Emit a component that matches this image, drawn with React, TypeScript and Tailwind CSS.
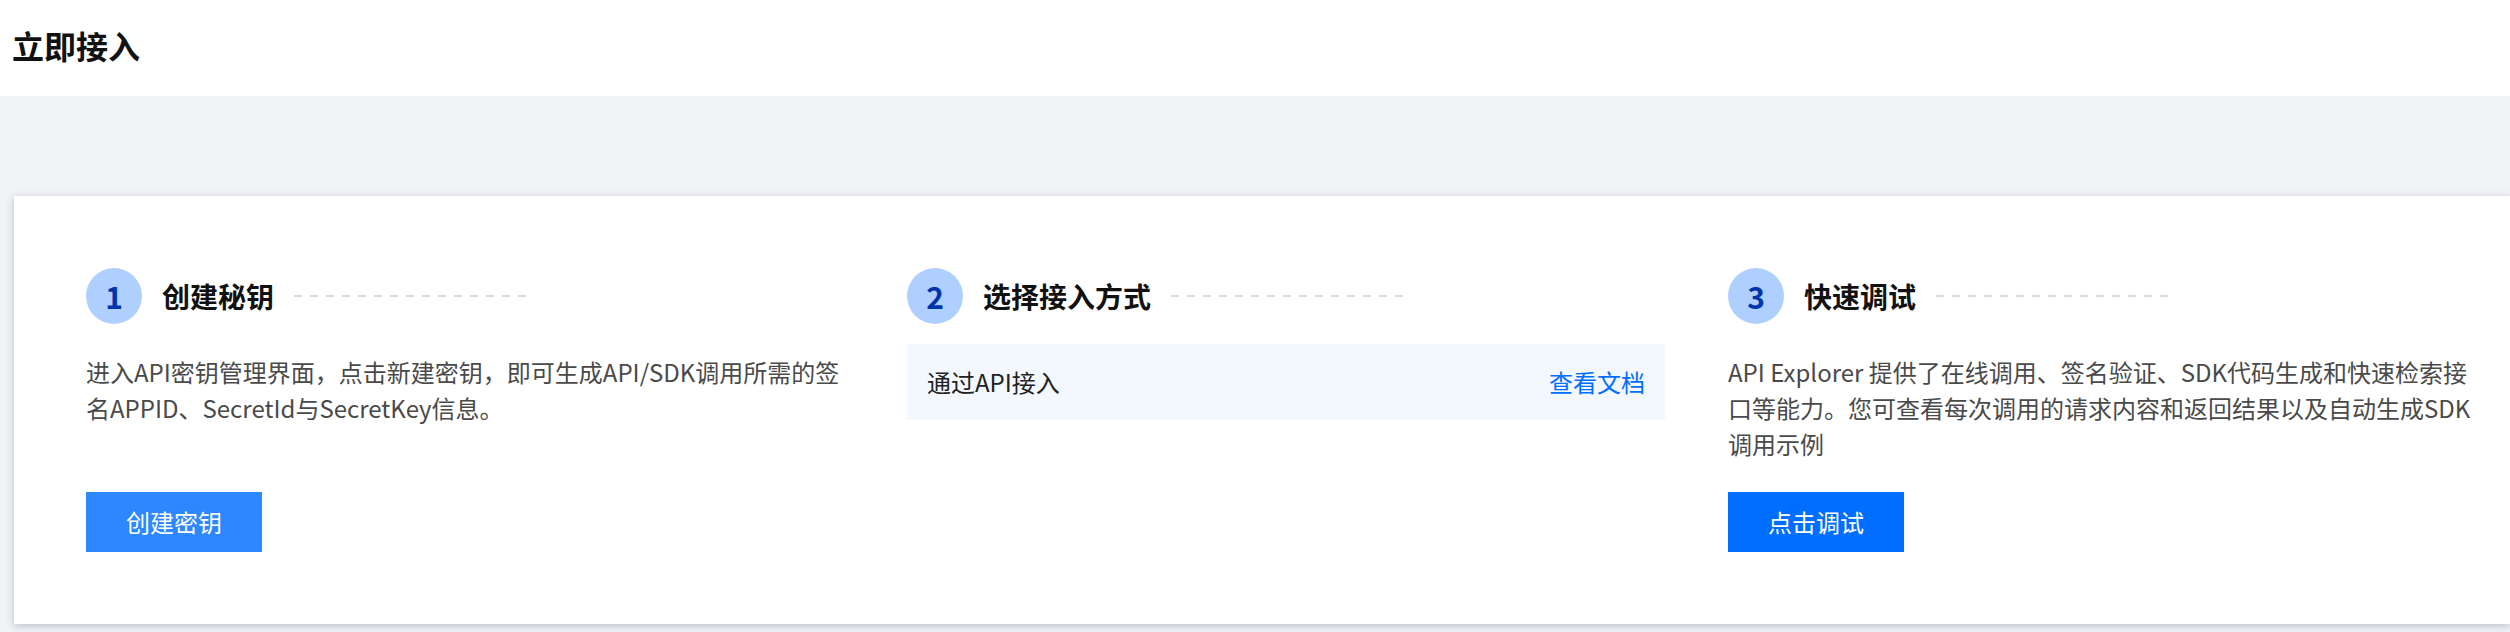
const steps = [
  {
    no: "1",
    title: "创建秘钥",
    desc: "进入API密钥管理界面，点击新建密钥，即可生成API/SDK调用所需的签名APPID、SecretId与SecretKey信息。",
    button: "创建密钥",
    buttonClass: "bg-[#2d87ff]",
  },
  {
    no: "2",
    title: "选择接入方式",
  },
  {
    no: "3",
    title: "快速调试",
    desc: "API Explorer 提供了在线调用、签名验证、SDK代码生成和快速检索接口等能力。您可查看每次调用的请求内容和返回结果以及自动生成SDK调用示例",
    button: "点击调试",
    buttonClass: "bg-[#006eff]",
  },
]

function StepHead({ no, title }: { no: string; title: string }) {
  return (
    <div className="flex items-center h-[56px]">
      <div className="w-[56px] h-[56px] rounded-full bg-[#afd0ff] flex items-center justify-center text-[30px] font-bold text-[#0034ad]">
        {no}
      </div>
      <div className="ml-[20px] text-[28px] font-bold text-[#111]">{title}</div>
      <div className="ml-[20px] w-[232px] h-[2px] bg-[repeating-linear-gradient(90deg,#dcdcdc_0_8px,transparent_8px_16px)]" />
    </div>
  )
}

export default function App() {
  return (
    <div
      className="min-h-screen bg-[#f2f3f7] overflow-hidden"
      style={{ fontFamily: '"Noto Sans CJK SC", "Noto Sans", sans-serif' }}
    >
      {/* page title */}
      <div className="h-[96px] bg-white flex items-center pl-[12px] pb-[6px]">
        <h1 className="text-[32px] font-bold text-[#111]">立即接入</h1>
      </div>

      <div className="pt-[100px] pl-[14px]">
        <div className="bg-white shadow-[0_2px_8px_rgba(54,58,80,0.28)] p-[72px] pr-0 grid grid-cols-[758px_758px_758px] gap-x-[63px]">
          {steps.map((s) => (
            <div key={s.no} className="flex flex-col">
              <StepHead no={s.no} title={s.title} />
              {s.no === "2" ? (
                <div className="mt-[20px] h-[76px] bg-[#f3f7fe] px-[20px] flex items-center justify-between text-[24px]">
                  <span className="text-[#222]">通过API接入</span>
                  <a className="text-[#006eff] cursor-pointer">查看文档</a>
                </div>
              ) : (
                <>
                  <p className="mt-[30px] text-[24px] leading-[36px] text-[#4a4a4a]">{s.desc}</p>
                  <div className="mt-auto pt-[30px]">
                    <button className={`h-[60px] w-[176px] text-[24px] text-white ${s.buttonClass}`}>
                      {s.button}
                    </button>
                  </div>
                </>
              )}
            </div>
          ))}
        </div>
      </div>
    </div>
  )
}
